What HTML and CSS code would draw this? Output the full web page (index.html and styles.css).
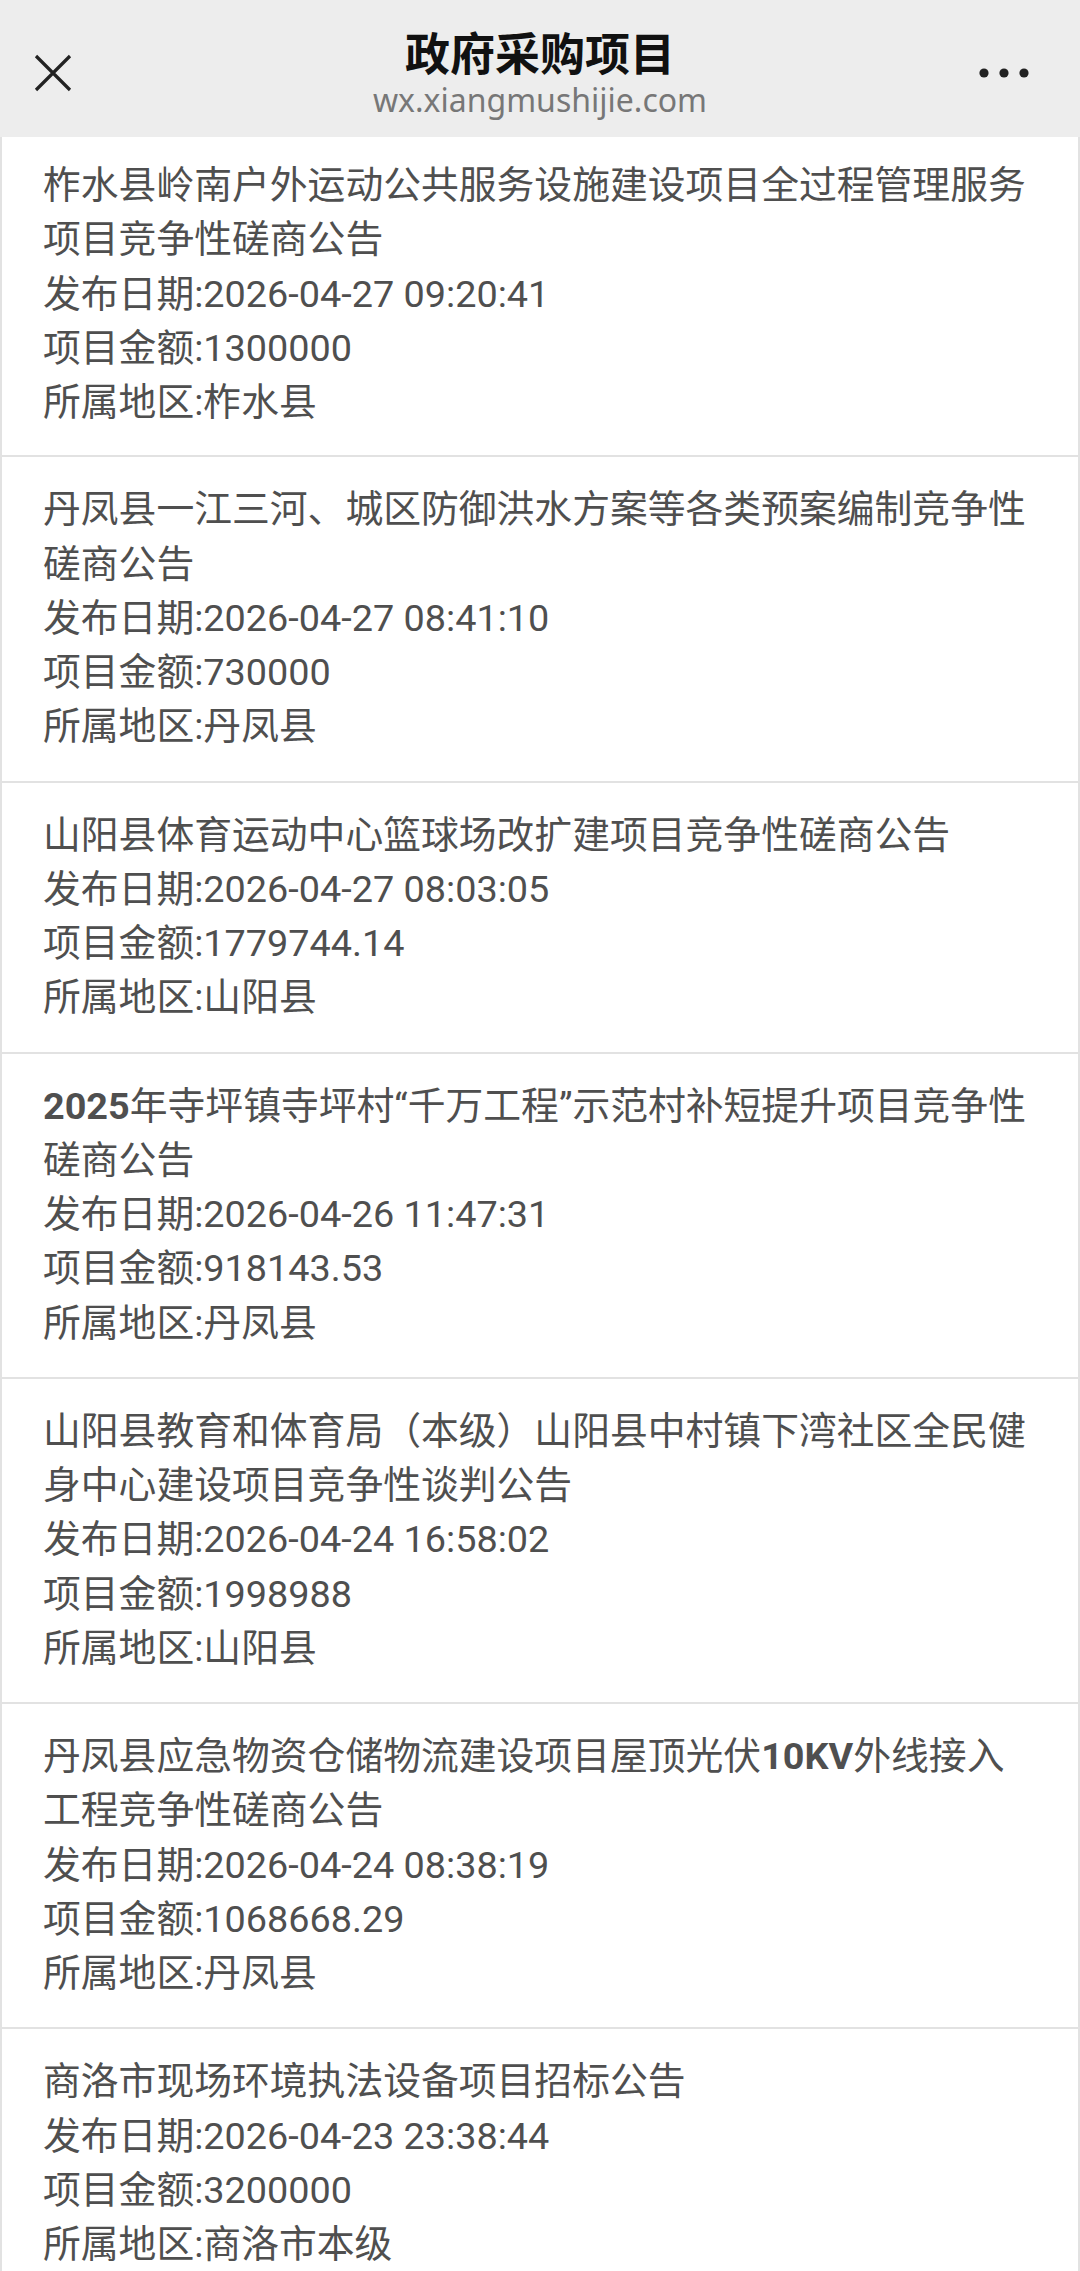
FILE: index.html
```html
<!DOCTYPE html>
<html lang="zh-CN">
<head>
  <meta charset="UTF-8">
  <title>政府采购项目</title>
  <link rel="stylesheet" href="styles.css">
</head>
<body>

<header class="topbar">
  <div class="topbar-side">
    <svg class="icon-close" width="40" height="40" viewBox="0 0 40 40">
      <path d="M3 3 L37 37 M37 3 L3 37" stroke="#222" stroke-width="3.2" fill="none"/>
    </svg>
  </div>
  <div class="topbar-title">
    <h1>政府采购项目</h1>
    <div class="url">wx.xiangmushijie.com</div>
  </div>
  <div class="topbar-side right">
    <svg class="icon-more" width="52" height="12" viewBox="0 0 52 12">
      <circle cx="6" cy="6" r="4.6" fill="#222"/>
      <circle cx="26" cy="6" r="4.6" fill="#222"/>
      <circle cx="46" cy="6" r="4.6" fill="#222"/>
    </svg>
  </div>
</header>

<div class="list">
  <div class="item">
    <div class="item-title">柞水县岭南户外运动公共服务设施建设项目全过程管理服务项目竞争性磋商公告</div>
    <div>发布日期:2026-04-27 09:20:41</div>
    <div>项目金额:1300000</div>
    <div>所属地区:柞水县</div>
  </div>
  <div class="item">
    <div class="item-title">丹凤县一江三河、城区防御洪水方案等各类预案编制竞争性磋商公告</div>
    <div>发布日期:2026-04-27 08:41:10</div>
    <div>项目金额:730000</div>
    <div>所属地区:丹凤县</div>
  </div>
  <div class="item">
    <div class="item-title">山阳县体育运动中心篮球场改扩建项目竞争性磋商公告</div>
    <div>发布日期:2026-04-27 08:03:05</div>
    <div>项目金额:1779744.14</div>
    <div>所属地区:山阳县</div>
  </div>
  <div class="item">
    <div class="item-title"><b>2025</b>年寺坪镇寺坪村“千万工程”示范村补短提升项目竞争性磋商公告</div>
    <div>发布日期:2026-04-26 11:47:31</div>
    <div>项目金额:918143.53</div>
    <div>所属地区:丹凤县</div>
  </div>
  <div class="item">
    <div class="item-title">山阳县教育和体育局（本级）山阳县中村镇下湾社区全民健身中心建设项目竞争性谈判公告</div>
    <div>发布日期:2026-04-24 16:58:02</div>
    <div>项目金额:1998988</div>
    <div>所属地区:山阳县</div>
  </div>
  <div class="item">
    <div class="item-title">丹凤县应急物资仓储物流建设项目屋顶光伏<b>10KV</b>外线接入工程竞争性磋商公告</div>
    <div>发布日期:2026-04-24 08:38:19</div>
    <div>项目金额:1068668.29</div>
    <div>所属地区:丹凤县</div>
  </div>
  <div class="item">
    <div class="item-title">商洛市现场环境执法设备项目招标公告</div>
    <div>发布日期:2026-04-23 23:38:44</div>
    <div>项目金额:3200000</div>
    <div>所属地区:商洛市本级</div>
  </div>
</div>

</body>
</html>
```

FILE: styles.css
```css
body {
  margin: 0;
  font-family: Roboto, "Noto Sans CJK SC", sans-serif;
  background-color: #ffffff;
  color: #4f4f4f;
}

.topbar {
  display: flex;
  align-items: center;
  height: 137px;
  box-sizing: border-box;
  padding: 27px 0 18px;
  background-color: #ededed;
}

.topbar-side {
  width: 150px;
  padding-left: 33px;
  box-sizing: border-box;
}

.topbar-side.right {
  display: flex;
  justify-content: flex-end;
  padding: 0 50px 0 0;
}

.icon-close,
.icon-more {
  display: block;
}

.topbar-title {
  flex: 1;
  text-align: center;
}

h1 {
  margin: 0;
  font-family: "Noto Sans CJK SC", sans-serif;
  font-size: 45px;
  line-height: 50px;
  font-weight: 700;
  color: #111;
}

.url {
  margin-top: 4px;
  font-family: "Noto Sans", sans-serif;
  font-size: 32px;
  line-height: 38px;
  color: #777;
}

.list {
  display: flex;
  flex-direction: column;
  gap: 2px;
  padding: 0 2px;
  background-color: #e2e2e2;
}

.item {
  background: #fff;
  padding: 25px 45px 27px 41px;
  font-size: 37.8px;
  line-height: 54.25px;
}

.item:first-child {
  padding-top: 21px;
  padding-bottom: 26px;
}

.item b {
  font-weight: 700;
}
```
